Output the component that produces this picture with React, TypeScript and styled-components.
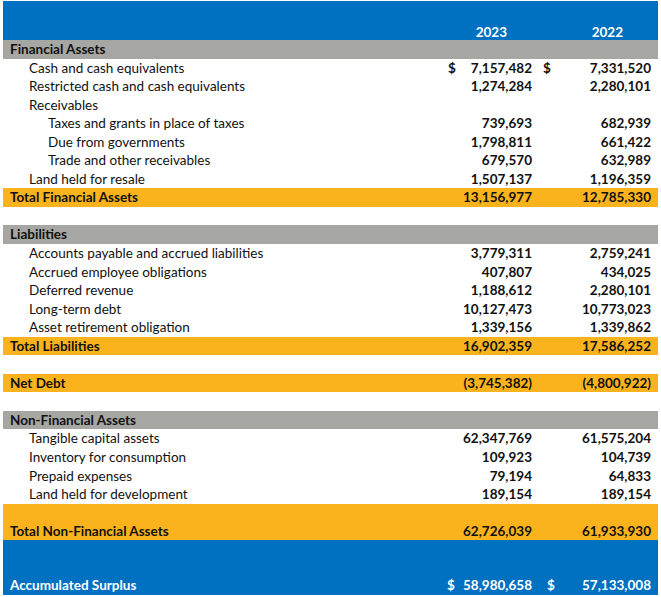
import React from 'react';
import styled, { createGlobalStyle } from 'styled-components';

const ROW = 18.56;

const GlobalStyle = createGlobalStyle`
  html, body { margin: 0; padding: 0; background: #ffffff; }
  body { font-family: Lato, "Open Sans", "Liberation Sans", sans-serif; }
`;

type Tone = 'plain' | 'section' | 'total' | 'blue';

const fills: Record<Tone, string> = {
  plain: 'transparent',
  section: '#a6a6a2',
  total: '#fab31c',
  blue: '#0070c0',
};

const Sheet = styled.div`
  width: 655px;
  margin: 1px 0 0 3px;
  display: flex;
  flex-direction: column;
`;

const Row = styled.div<{ $tone: Tone; $height?: number }>`
  display: grid;
  grid-template-columns: 437px 100px 118px;
  align-items: end;
  height: ${(p) => p.$height ?? ROW}px;
  background: ${(p) => fills[p.$tone]};
  color: ${(p) => (p.$tone === 'blue' ? '#ffffff' : '#111111')};
  font-size: 13.5px;
  line-height: ${ROW}px;
`;

const Label = styled.div<{ $level: number; $bold: boolean }>`
  padding-left: ${(p) => 7 + p.$level * 19}px;
  font-weight: ${(p) => (p.$bold ? 700 : 400)};
  white-space: nowrap;
`;

const Amount = styled.div<{ $left: number; $right: number }>`
  display: flex;
  justify-content: space-between;
  padding-left: ${(p) => p.$left}px;
  padding-right: ${(p) => p.$right}px;
  font-weight: 700;
  white-space: nowrap;
`;

const Year = styled.div<{ $right: number }>`
  text-align: right;
  padding-right: ${(p) => p.$right}px;
  line-height: 16px;
  font-weight: 700;
`;

type Line = {
  label?: string;
  level?: number;
  tone?: Tone;
  a?: string;
  b?: string;
  dollar?: boolean;
  height?: number;
};

const lines: Line[] = [
  { label: 'Financial Assets', tone: 'section' },
  { label: 'Cash and cash equivalents', level: 1, a: '7,157,482', b: '7,331,520', dollar: true },
  { label: 'Restricted cash and cash equivalents', level: 1, a: '1,274,284', b: '2,280,101' },
  { label: 'Receivables', level: 1 },
  { label: 'Taxes and grants in place of taxes', level: 2, a: '739,693', b: '682,939' },
  { label: 'Due from governments', level: 2, a: '1,798,811', b: '661,422' },
  { label: 'Trade and other receivables', level: 2, a: '679,570', b: '632,989' },
  { label: 'Land held for resale', level: 1, a: '1,507,137', b: '1,196,359' },
  { label: 'Total Financial Assets', tone: 'total', a: '13,156,977', b: '12,785,330' },
  {},
  { label: 'Liabilities', tone: 'section' },
  { label: 'Accounts payable and accrued liabilities', level: 1, a: '3,779,311', b: '2,759,241' },
  { label: 'Accrued employee obligations', level: 1, a: '407,807', b: '434,025' },
  { label: 'Deferred revenue', level: 1, a: '1,188,612', b: '2,280,101' },
  { label: 'Long-term debt', level: 1, a: '10,127,473', b: '10,773,023' },
  { label: 'Asset retirement obligation', level: 1, a: '1,339,156', b: '1,339,862' },
  { label: 'Total Liabilities', tone: 'total', a: '16,902,359', b: '17,586,252' },
  {},
  { label: 'Net Debt', tone: 'total', a: '(3,745,382)', b: '(4,800,922)' },
  {},
  { label: 'Non-Financial Assets', tone: 'section' },
  { label: 'Tangible capital assets', level: 1, a: '62,347,769', b: '61,575,204' },
  { label: 'Inventory for consumption', level: 1, a: '109,923', b: '104,739' },
  { label: 'Prepaid expenses', level: 1, a: '79,194', b: '64,833' },
  { label: 'Land held for development', level: 1, a: '189,154', b: '189,154' },
  { label: 'Total Non-Financial Assets', tone: 'total', a: '62,726,039', b: '61,933,930', height: 36.7 },
  { label: 'Accumulated Surplus', tone: 'blue', a: '58,980,658', b: '57,133,008', dollar: true, height: 54.3 },
];

export default function App() {
  return (
    <>
      <GlobalStyle />
      <Sheet>
        <Row $tone="blue" $height={39}>
          <div />
          <Year $right={33}>2023</Year>
          <Year $right={35}>2022</Year>
        </Row>
        {lines.map((l, i) => {
          const tone = l.tone ?? 'plain';
          const bold = tone !== 'plain';
          return (
            <Row key={i} $tone={tone} $height={l.height}>
              <Label $level={l.level ?? 0} $bold={bold}>
                {l.label ?? '\u00a0'}
              </Label>
              <Amount $left={tone === 'blue' ? 7 : 8} $right={8}>
                <span>{l.dollar ? '$' : ''}</span>
                <span>{l.a ?? ''}</span>
              </Amount>
              <Amount $left={tone === 'blue' ? 7 : 3} $right={7}>
                <span>{l.dollar ? '$' : ''}</span>
                <span>{l.b ?? ''}</span>
              </Amount>
            </Row>
          );
        })}
      </Sheet>
    </>
  );
}
